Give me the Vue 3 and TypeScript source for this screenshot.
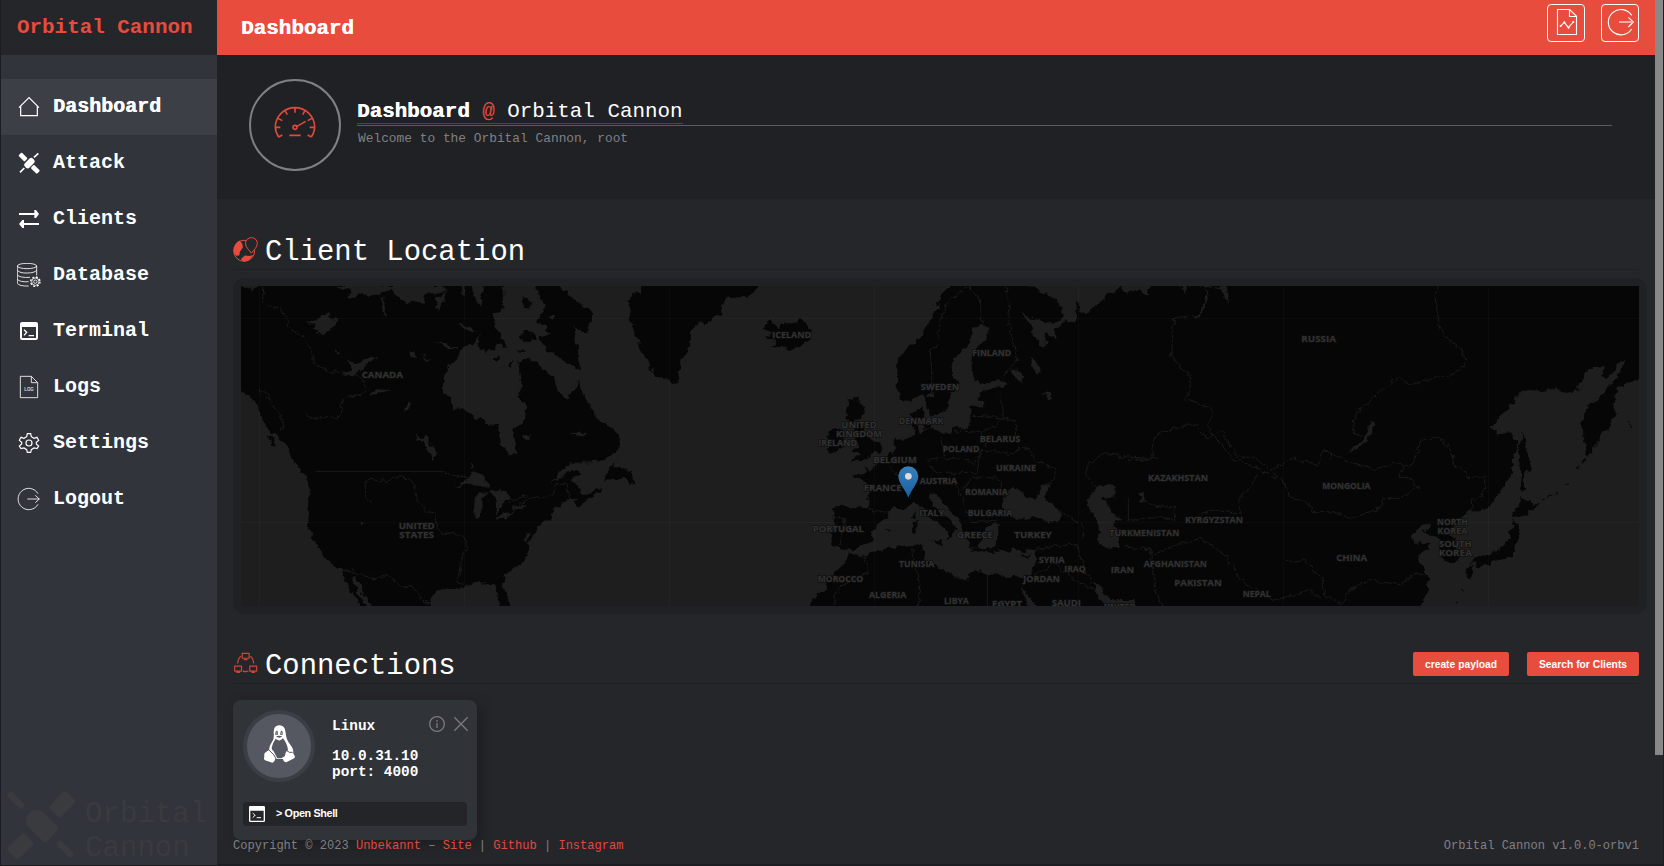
<script setup lang="ts">
interface NavItem {
  id: string
  label: string
  box: string
}

interface MapLabel {
  text: string
  x: number
  y: number
  w: number
}

const navItems: NavItem[] = [
  { id: 'home', label: 'Dashboard', box: '51 285 72 72' },
  { id: 'attack', label: 'Attack', box: '51 453 72 72' },
  { id: 'clients', label: 'Clients', box: '51 621 72 72' },
  { id: 'database', label: 'Database', box: '51 39 72 72' },
  { id: 'terminal', label: 'Terminal', box: '51 207 72 72' },
  { id: 'logs', label: 'Logs', box: '51 375 72 72' },
  { id: 'settings', label: 'Settings', box: '51 543 72 72' },
  { id: 'logout', label: 'Logout', box: '51 711 72 72' },
]

// Label centres and widths, in map units (three per pixel)
const labels: MapLabel[] = [
  { text: 'CANADA', x: 472, y: 324, w: 124 },
  { text: 'UNITED', x: 575, y: 776, w: 108 },
  { text: 'STATES', x: 575, y: 803, w: 104 },
  { text: 'ICELAND', x: 1700, y: 205, w: 116 },
  { text: 'UNITED', x: 1902, y: 473, w: 106 },
  { text: 'KINGDOM', x: 1902, y: 500, w: 138 },
  { text: 'IRELAND', x: 1838, y: 528, w: 116 },
  { text: 'SWEDEN', x: 2145, y: 361, w: 116 },
  { text: 'DENMARK', x: 2088, y: 463, w: 134 },
  { text: 'BELGIUM', x: 2010, y: 579, w: 130 },
  { text: 'FRANCE', x: 1973, y: 663, w: 114 },
  { text: 'PORTUGAL', x: 1840, y: 786, w: 154 },
  { text: 'MOROCCO', x: 1846, y: 935, w: 136 },
  { text: 'ALGERIA', x: 1988, y: 984, w: 112 },
  { text: 'TUNISIA', x: 2075, y: 892, w: 106 },
  { text: 'FINLAND', x: 2300, y: 258, w: 116 },
  { text: 'BELARUS', x: 2325, y: 517, w: 122 },
  { text: 'POLAND', x: 2208, y: 545, w: 110 },
  { text: 'UKRAINE', x: 2373, y: 603, w: 120 },
  { text: 'AUSTRIA', x: 2140, y: 643, w: 112 },
  { text: 'ROMANIA', x: 2284, y: 675, w: 128 },
  { text: 'ITALY', x: 2120, y: 738, w: 74 },
  { text: 'BULGARIA', x: 2295, y: 739, w: 134 },
  { text: 'GREECE', x: 2250, y: 804, w: 108 },
  { text: 'TURKEY', x: 2424, y: 804, w: 112 },
  { text: 'SYRIA', x: 2480, y: 879, w: 78 },
  { text: 'IRAQ', x: 2550, y: 905, w: 64 },
  { text: 'JORDAN', x: 2450, y: 935, w: 110 },
  { text: 'IRAN', x: 2692, y: 910, w: 70 },
  { text: 'LIBYA', x: 2194, y: 1001, w: 74 },
  { text: 'EGYPT', x: 2346, y: 1010, w: 90 },
  { text: 'SAUDI', x: 2524, y: 1007, w: 88 },
  { text: 'UNITED', x: 2684, y: 1020, w: 96 },
  { text: 'TURKMENISTAN', x: 2758, y: 797, w: 210 },
  { text: 'KAZAKHSTAN', x: 2859, y: 632, w: 180 },
  { text: 'KYRGYZSTAN', x: 2967, y: 759, w: 174 },
  { text: 'AFGHANISTAN', x: 2851, y: 892, w: 190 },
  { text: 'PAKISTAN', x: 2919, y: 948, w: 142 },
  { text: 'NEPAL', x: 3095, y: 981, w: 84 },
  { text: 'RUSSIA', x: 3281, y: 215, w: 104 },
  { text: 'MONGOLIA', x: 3364, y: 658, w: 144 },
  { text: 'CHINA', x: 3380, y: 872, w: 92 },
  { text: 'NORTH', x: 3682, y: 766, w: 92 },
  { text: 'KOREA', x: 3682, y: 792, w: 90 },
  { text: 'SOUTH', x: 3691, y: 831, w: 98 },
  { text: 'KOREA', x: 3691, y: 858, w: 100 },
]
</script>

<template>
  <div class="page">
    <aside class="sidebar">
      <div class="brand">Orbital Cannon</div>
      <nav class="nav">
        <a v-for="(item, i) in navItems" :key="item.id" class="nav-item" :class="{ active: i === 0 }">
          <svg class="nav-icon" :viewBox="item.box">
            <g v-if="item.id === 'home'" class="line">
              <path d="M57 323 L87 293 L117 323 M62 319 V347 H112 V319" />
            </g>
            <g v-else-if="item.id === 'attack'" class="solid">
              <rect x="-13" y="-7" width="26" height="14" rx="3" transform="translate(69 471) rotate(45)" />
              <rect x="-13" y="-7" width="26" height="14" rx="3" transform="translate(106 508) rotate(45)" />
              <rect x="-17" y="-9" width="34" height="19" rx="7" transform="translate(88 489) rotate(-45)" />
              <path d="M102 472 L115 460 M60 517 L73 504" stroke="#fff" stroke-width="5" />
            </g>
            <g v-else-if="item.id === 'clients'" class="solid">
              <path d="M57 639 H103 V630 L108 630 L117 642 L108 654 H103 V645 H57Z" />
              <path d="M117 669 H72 V660 H67 L57 672 L67 684 H72 V675 H117Z" />
            </g>
            <g v-else-if="item.id === 'database'" class="line fine">
              <ellipse cx="81" cy="48" rx="29" ry="8" />
              <path d="M52 48 V100 Q58 109 86 108 M110 48 V76 M52 61 Q60 70 81 69 Q103 69 110 61 M52 75 Q60 84 90 82 M52 88 Q60 97 86 95" />
              <circle cx="106" cy="95" r="11" />
              <circle cx="106" cy="95" r="14" stroke-dasharray="6 5" stroke-width="4" />
              <circle cx="106" cy="95" r="5" />
            </g>
            <g v-else-if="item.id === 'terminal'" class="solid">
              <path fill-rule="evenodd" d="M66 216 H108 Q114 216 114 222 V264 Q114 270 108 270 H66 Q60 270 60 264 V222 Q60 216 66 216Z M66 231 V264 H108 V231Z" />
              <path d="M72 239 L80 247 L72 256 M86 257 H102" fill="none" stroke="#fff" stroke-width="4" />
            </g>
            <g v-else-if="item.id === 'logs'" class="line fine">
              <path d="M61 379 H94 L113 398 V443 H61Z M94 379 V398 H113" />
              <text x="87" y="423" text-anchor="middle" class="log-text" textLength="29" lengthAdjust="spacingAndGlyphs">LOG</text>
            </g>
            <g v-else-if="item.id === 'settings'" class="line">
              <circle cx="87" cy="579" r="9" />
              <path d="M82 551 H92 L94 560 L102 565 L111 562 L116 571 L109 577 V582 L116 588 L111 596 L102 594 L94 599 L92 607 H82 L80 599 L72 594 L63 596 L58 588 L65 582 V577 L58 571 L63 562 L72 565 L80 560Z" />
            </g>
            <g v-else class="line fine">
              <path d="M114 731 A32 32 0 1 0 114 763 M82 747 H118 M106 736 L118 747 L106 758" />
            </g>
          </svg>
          <span>{{ item.label }}</span>
        </a>
      </nav>
      <div class="watermark">
        <svg viewBox="20 92 206 206">
          <rect x="-31" y="-10" width="62" height="20" rx="10" transform="translate(47 120) rotate(45)" />
          <rect x="-31" y="-10" width="62" height="20" rx="10" transform="translate(193 265) rotate(45)" />
          <rect x="-36" y="-24" width="72" height="48" rx="11" transform="translate(185 132) rotate(-45)" />
          <rect x="-36" y="-24" width="72" height="48" rx="11" transform="translate(60 257) rotate(-45)" />
          <path d="M82 198 A32 32 0 0 1 125 153 L168 195 Q176 203 168 211 L142 240 Q133 248 125 240Z" />
        </svg>
        <div class="watermark-text">Orbital<br />Cannon</div>
      </div>
    </aside>

    <main class="main">
      <header class="topbar">
        <h1>Dashboard</h1>
        <div class="top-actions">
          <div class="top-btn">
            <svg viewBox="489 12 114 114">
              <path d="M520.5 28.5 H557 L577.5 49 V103.5 H520.5Z M556.5 28 V49.5 H578" />
              <path d="M529 79 L541 67 L553 83 L568 66" />
              <circle cx="530" cy="78" r="1.5" /><circle cx="541" cy="67" r="1.5" /><circle cx="554" cy="83" r="1.5" /><circle cx="568" cy="66" r="1.5" />
            </svg>
          </div>
          <div class="top-btn">
            <svg viewBox="651 12 114 114">
              <path d="M743 46 A38 38 0 1 0 743 87 M733 52 L748 66 L733 81" />
              <path d="M705 66 H748" class="faded" />
            </svg>
          </div>
        </div>
      </header>

      <section class="hero">
        <div class="gauge">
          <svg viewBox="87 57 276 276">
            <path d="M176 231 Q166 215 166 202 A59 59 0 0 1 284 202 Q284 215 274 231 M176 231 L187 225 M274 231 L263 225 M166 202 H181 M284 202 H269 M225 143 V158 M195 152 L202 164 M255 152 L248 164 M174 175 L187 182 M276 175 L263 182 M208 226 H242 M231 199 L257 184" />
            <circle cx="225" cy="202" r="6" />
          </svg>
        </div>
        <div class="hero-copy">
          <div class="hero-title">
            <span><b>Dashboard</b> <i>@</i> Orbital Cannon</span>
          </div>
          <p>Welcome to the Orbital Cannon, root</p>
        </div>
      </section>

      <div class="content">
        <div class="section-head">
          <svg class="head-icon" viewBox="38 530 76 76">
            <circle cx="72" cy="572" r="32" class="ring-arc" />
            <path class="fill" d="M40 571 Q42 548 58 541 L66 550 L68 562 L59 575 L57 586 L48 587 Q40 582 40 571Z M62 597 L74 586 L88 588 L99 585 Q88 606 68 604Z" />
            <path class="cut" d="M94 579 C86 568 76 562 76 549 A18 17 0 0 1 112 549 C112 562 102 568 94 579Z" />
          </svg>
          <h2>Client Location</h2>
        </div>

        <div class="map-panel">
          <svg class="map" viewBox="48 48 4194 960" preserveAspectRatio="none">
            <defs>
              <filter id="coast" x="0" y="0" width="100%" height="100%" filterUnits="objectBoundingBox" color-interpolation-filters="sRGB">
                <feTurbulence type="fractalNoise" baseFrequency="0.05" numOctaves="3" seed="4" result="n" />
                <feDisplacementMap in="SourceGraphic" in2="n" scale="22" xChannelSelector="R" yChannelSelector="G" />
              </filter>
              <linearGradient id="pin" x1="0" y1="0" x2="0" y2="1">
                <stop offset="0" stop-color="#3a7fb5" />
                <stop offset="1" stop-color="#1560a3" />
              </linearGradient>
            </defs>
            <rect class="water" x="0" y="0" width="4300" height="1060" />
            <g filter="url(#coast)">
              <rect class="water" x="-40" y="-40" width="4400" height="1150" />

              <!-- North America -->
              <path class="land" d="M0 0 H833 L838 75 L832 120 L806 130 L805 165 L850 235 L820 225 L785 250 L775 235 L757 232 L765 190 L745 225 L718 228 L705 240 L700 262 L670 290 L655 325 L653 370 L675 380 L684 418 L712 415 L745 435 L785 462 L820 465 L824 520 L858 556 L873 545 L862 478 L895 460 L903 430 L900 395 L876 378 L890 350 L884 310 L880 275 L900 268 L935 275 L960 300 L990 320 L998 365 L1025 390 L1045 365 L1065 333 L1080 380 L1095 400 L1110 440 L1140 460 L1170 480 L1185 505 V530 L1170 545 L1140 570 L1100 577 L1040 578 L1005 605 L975 640 L1010 622 L1040 600 L1065 600 L1068 610 L1040 630 L1065 650 L1062 670 L1085 675 L1125 655 L1128 665 L1090 690 L1055 710 L1045 700 L1060 690 L1035 687 L985 715 L980 745 L935 770 L925 800 L910 815 L908 855 L890 880 L840 915 L834 945 L852 1000 V1030 H835 L820 985 L810 950 L790 940 L760 937 L725 945 L700 955 L650 955 L625 970 L615 1005 V1030 H465 L420 985 L405 940 L385 915 L380 920 L395 965 L430 1020 H415 L385 975 L370 950 L347 900 L300 868 L285 840 L257 795 L248 720 L255 650 L245 620 L200 570 L190 530 L160 500 L135 485 L110 445 L95 400 L48 360 L0 340Z" />
              <path class="land" d="M928 30 H980 L1030 75 L1070 105 L1108 130 L1095 160 L1082 193 L1060 180 L1045 165 L1050 200 L1060 235 L1065 300 L1035 285 L1000 260 L960 235 L940 200 L975 195 L955 165 L932 160 L955 125 L960 105 L940 70Z M893 85 Q915 72 922 100 Q915 122 897 112Z M882 200 L898 180 L918 190 L935 205 L900 217 L883 210Z M802 270 L820 258 L826 266 L808 280Z M852 275 L862 273 L860 293 L852 290Z M770 175 L790 165 L815 200 L805 235 L775 230Z M877 245 L895 235 L900 245Z" />
              <path class="land" d="M1185 552 L1170 572 L1165 590 L1190 595 L1220 605 L1225 645 L1200 625 L1175 630 L1137 632 L1150 600Z M198 565 L240 580 L270 612 L272 628 L240 610Z M130 490 L145 505 L155 533 L140 520Z" />
              <path class="water" d="M370 88 L410 73 L460 78 L500 55 L512 75 L545 95 L605 102 L590 75 L640 70 L665 60 L650 45 H330 L350 55 L380 60Z M712 45 H722 L718 80 L712 70Z M740 45 H780 L765 110 L745 75Z M240 155 L275 150 L310 128 L322 148 L340 148 L330 172 L305 188 L270 195 L280 180 L262 178 L275 163Z M350 315 L385 298 L362 265 L395 282 L435 262 L460 262 L425 280 L395 308 L375 320Z M430 378 L450 358 L500 360 L460 368Z M700 162 L725 165 L755 183 L740 187Z M630 217 L665 220 L700 240 L670 235Z M572 495 L590 505 L605 495 L632 550 L627 573 L612 540 L592 515 L575 512Z M552 250 L568 242 L572 265 L558 262Z M535 430 L545 400 L558 400 L550 425Z M690 650 L720 630 L750 605 L775 620 L792 650 L755 650 L725 640Z M748 740 L748 690 L760 670 L790 667 L770 690 L768 740 L757 747Z M795 660 L835 662 L862 690 L835 690 L830 710 L812 735 L808 690Z M808 745 L845 728 L870 722 L840 745 L815 750Z M860 712 L900 702 L905 710 L865 720Z M470 80 H478 L480 140 L470 115Z M635 85 L665 62 L640 125Z M885 500 L920 490 L905 510Z M1040 485 L1085 490 L1060 500Z M48 45 H100 L85 62Z M735 580 H742 V592 H735Z M405 750 L417 757 L412 765Z M972 135 L985 140 L980 150Z M900 790 L915 785 L905 820Z M328 240 L345 248 L335 252Z M590 255 L618 270 L605 272Z" />

              <!-- Greenland, Iceland, Britain -->
              <path class="land" d="M1250 20 H1620 L1580 72 L1525 88 L1505 80 L1485 130 L1455 155 L1435 168 L1425 155 L1400 180 L1390 240 L1370 270 L1360 340 L1345 345 L1325 325 L1290 320 L1270 280 L1245 235 L1230 180 L1215 150 L1213 110 L1222 70 L1248 72Z" />
              <path class="land" d="M1615 175 L1635 150 L1655 165 L1660 180 L1670 160 L1700 160 L1715 155 L1728 147 L1745 160 L1760 180 L1755 210 L1695 243 L1665 232 L1638 230 L1655 215 L1620 198 L1640 195Z" />
              <path class="land" d="M1870 385 L1905 380 L1903 400 L1922 410 L1910 440 L1890 448 L1915 480 L1935 505 L1970 520 L1965 545 L1925 560 L1905 570 L1870 580 L1905 550 L1875 545 L1900 530 L1890 500 L1885 450 L1865 440Z M1815 480 L1850 475 L1860 500 L1850 535 L1815 548 L1805 540 L1820 520 L1805 500Z" />

              <!-- Eurasia and North Africa -->
              <path class="land" d="M2190 20 L2155 70 L2135 100 L2145 110 L2100 170 L2085 205 L2045 240 L2015 275 V350 L2025 385 L2050 395 L2075 380 L2095 370 L2105 400 L2120 440 L2150 430 L2170 410 L2175 370 L2200 355 L2205 340 L2185 320 L2182 280 L2210 240 L2235 215 L2243 175 L2265 165 L2290 172 V195 L2265 225 L2240 260 V300 L2250 330 L2275 345 L2325 328 L2350 340 L2295 358 L2265 365 L2260 395 L2280 395 L2273 415 L2240 405 L2235 470 L2220 480 L2190 470 L2175 485 L2145 490 L2125 470 L2085 488 L2077 455 L2095 440 L2092 408 L2060 435 L2065 480 L2072 495 L2045 505 L2010 510 L2005 545 L1965 575 L1935 605 L1920 590 L1928 612 L1885 615 L1925 635 L1933 660 L1928 715 L1850 710 L1822 718 L1825 765 L1818 825 L1843 828 L1867 845 L1895 832 L1937 820 L1943 790 L1960 760 L1990 742 L1987 725 L2005 712 L2035 720 L2070 695 L2090 710 L2110 740 L2145 760 L2175 790 L2165 812 L2180 800 L2200 775 L2160 740 L2125 705 L2115 675 L2135 672 L2150 700 L2205 750 L2215 790 L2235 830 L2260 835 L2265 810 L2290 765 L2325 762 L2315 800 L2310 835 L2345 845 L2370 835 L2390 850 L2435 832 L2430 870 L2420 915 L2395 920 L2335 920 L2287 912 L2250 900 L2220 935 L2175 905 L2150 900 L2100 870 L2095 830 L2065 825 L2005 830 L1945 845 L1915 860 L1870 850 L1860 880 L1815 920 L1805 960 L1765 985 L1740 1030 H4300 V0 H2190Z" />
              <path class="land" d="M2062 728 H2072 V750 H2062Z M2060 762 L2078 755 L2075 795 L2062 793Z M2118 812 L2155 810 L2150 832Z M2095 465 L2115 462 L2112 478 L2098 478Z M1985 780 L1995 778 L1990 786Z M2240 835 H2320 V845 H2240Z" />
              <path class="water" d="M2395 20 L2415 48 L2465 70 L2512 110 V150 L2475 160 L2425 150 L2388 122 L2400 145 L2420 165 L2430 205 L2455 230 L2465 215 L2455 190 L2495 205 L2490 180 L2525 150 L2550 155 L2555 115 L2553 95 L2565 100 L2565 125 L2585 132 L2600 110 L2625 100 L2645 75 L2690 50 L2705 80 L2730 55 L2765 75 L2780 20Z" />
              <path class="water" d="M2825 20 L2875 55 L2890 75 L2880 45 L2940 45 L2952 80 L2940 110 L2925 145 L2890 135 L2925 135 L2940 90 L2945 55 L2995 45 L3010 70 L3012 105 L3000 90 L2995 60 L2950 45Z" />
              <path class="water" d="M2335 725 L2330 700 L2350 660 L2368 652 L2390 665 L2400 680 L2430 690 L2450 645 L2480 640 L2455 680 L2480 700 L2515 735 L2505 757 L2460 755 L2420 740 L2375 750Z" />
              <path class="water" d="M2590 690 L2610 655 L2650 643 L2672 650 L2665 680 L2635 685 L2665 735 L2690 745 L2665 760 L2682 790 V828 L2650 833 L2615 815 L2625 770 L2600 735Z M2357 300 L2375 295 L2395 320 L2390 340 L2370 330Z M2415 265 L2430 270 L2445 300 L2440 318 L2425 300Z M2455 365 L2475 370 L2480 385 L2470 392Z M2745 670 L2755 665 L2760 695 L2745 695Z" />
              <path class="water" d="M2385 945 L2450 1030 H2415 L2400 980Z M2605 940 L2625 945 L2645 980 L2675 990 L2725 990 V1030 H2660 L2615 975Z M3440 455 L3447 452 L3440 490 L3410 530 L3365 548 L3400 525 L3425 490Z M3313 550 H3320 L3318 570Z M2105 375 L2120 370 L2130 385Z M2310 860 L2400 858 L2340 880Z M2395 858 L2430 850 L2410 868Z" />
              <path class="land" d="M2385 858 L2420 850 L2400 866Z" />

              <!-- Pacific coast -->
              <path class="water" d="M4300 300 L4242 325 L4205 340 L4180 350 L4162 395 L4175 435 L4157 455 L4155 480 L4130 490 L4115 525 L4088 558 L4075 500 L4072 450 L4090 405 L4125 380 L4175 325 L4200 272 L4180 268 L4175 300 L4135 325 V292 L4090 295 L4055 355 L4065 360 L4015 370 L3990 352 L3970 362 L3905 360 L3880 375 L3845 425 L3793 473 L3815 480 V500 L3850 490 L3870 500 L3880 520 L3865 560 L3860 610 L3825 665 L3790 715 L3765 725 L3740 720 L3705 740 L3695 760 L3660 795 L3655 820 L3700 850 L3705 870 L3685 880 L3655 870 L3645 810 L3620 795 L3595 785 L3615 765 L3600 762 L3555 795 L3575 820 L3620 822 L3575 865 L3595 890 L3610 930 L3608 960 L3580 1030 H4300Z" />
              <path class="land" d="M3650 795 L3690 800 L3705 855 L3700 872 L3670 880 L3655 860Z M3893 485 L3902 520 L3910 570 L3922 605 L3898 602 L3893 640 L3905 658 L3885 665 V600 L3880 540Z M3883 675 L3910 695 L3935 705 L3905 735 L3862 745 L3870 720 L3885 710Z M3865 750 L3880 760 L3885 795 L3870 830 L3865 860 L3825 870 L3800 875 L3795 885 L3770 885 L3735 880 L3750 860 L3790 855 L3830 835 L3850 810Z M3720 890 L3745 888 L3740 920 L3727 925Z M3750 885 L3780 875 L3785 885 L3760 897Z" />
              <path d="M3935 705 L3970 680 L4000 662 M4020 645 L4028 640 M4060 595 L4085 562 M4210 460 L4222 475 M3690 1000 L3698 990 M3712 970 L3715 962" fill="none" stroke="#080808" stroke-width="4" stroke-dasharray="12 9" />

              <!-- Borders -->
              <g class="border">
                <path d="M650 604 L700 620 H735 M112 48 L115 100 L130 115 L165 112 L188 145 L190 170 L240 205 L262 250 L265 278 L310 304 L370 310 M395 310 L425 350 V368 L355 387 L345 440 L258 445 L243 430 M440 695 L423 685 L420 640 L435 628 L480 634 L500 625 L545 622 L570 645 L577 690 L600 725 L625 728 L640 775 L652 790 L680 790 L715 800 L730 830 L705 880 L702 915 L695 935 L715 940 M347 900 L380 902 L430 922 H470 L490 915 L535 957 L560 946 L600 1000 L620 1006 M865 715 L920 683 H970 L990 660 L1000 640 L1020 640 L1030 687 M100 352 L120 370 L175 450 L170 480 M840 700 L905 680" />
                <path d="M2225 48 L2265 85 L2275 165 M2340 48 L2355 100 L2350 150 L2375 270 L2330 325 M2225 48 L2170 95 L2145 160 L2140 220 L2115 240 L2120 290 V370 M2325 380 L2335 445 M2240 440 L2285 438 L2335 445 L2370 450 L2380 540 M2275 485 L2310 465 L2335 445 M2145 490 L2155 560 L2250 580 L2270 540 L2350 550 L2380 540 L2410 535 L2430 575 L2495 595 L2490 625 L2450 650 M2155 560 L2110 575 L2130 605 L2190 610 L2255 610 L2270 540 M2190 483 L2270 487 L2285 530 M1935 715 L1985 735 M1825 740 L1860 745 L1845 825 M1920 860 L1930 910 L1870 935 L1830 965 V1008 M2060 830 L2065 880 L2085 930 L2080 1008 M2055 680 L2050 640 L1990 590 M2095 640 L2190 630 L2205 680 L2240 755 L2320 750 M2320 625 L2340 680 L2350 700 M2215 655 L2245 620 L2320 625 M2430 920 L2490 880 L2550 930 L2610 960 M2435 840 L2555 820 L2570 870 L2600 940 M2500 720 L2570 760 L2575 810" />
                <path d="M2610 650 L2585 620 L2590 580 L2640 548 L2690 560 L2780 565 L2790 495 L2890 462 L2915 465 L2945 505 L2990 485 M3045 560 L3095 565 L3135 600 M2990 485 L3040 560 M2945 465 L3020 565 L3090 590 L3180 640 M2945 465 L2965 440 L2960 415 L2880 390 L2900 325 L2840 260 L2845 150 L2890 137 M2805 565 L2710 570 M2710 755 L2800 740 L2855 750 L2845 710 L2790 712 L2750 680 M2690 830 L2780 840 L2785 940 L2810 1008 M2785 855 L2850 825 L2925 805 L3000 855 L3045 930 L3150 990 L3260 960 L3290 990 M3135 600 L3205 565 L3280 585 L3295 538 L3360 570 L3445 598 L3510 580 L3560 590 L3590 510 L3640 505 L3670 530 L3690 585 L3740 625 L3785 620 L3770 680 L3740 690 L3738 720 M3135 600 L3180 640 L3190 680 L3240 690 L3265 725 L3330 725 L3375 745 L3470 715 L3475 685 L3520 685 L3580 650 L3550 625 L3525 620 L3535 590 M3100 610 L3075 655 L3040 690 L3050 730 L2950 720 L2900 760 M3640 48 L3630 100 L3650 190 L3715 245 L3720 285 L3690 310 L3600 330 L3560 347 L3520 322 L3390 430 L3385 490 L3410 497 M3185 875 L3235 870 L3290 920 L3300 980 L3350 1000 L3370 965 L3435 930 L3530 945 L3570 910 L3600 915" />
              </g>
            </g>
            <path class="border" d="M272 604 H652 M2287 915 V1008 M2710 683 V755" />
            <path class="grid" d="M103 48 V1008 M718 48 V1008 M1333 48 V1008 M1948 48 V1008 M2561 48 V1008 M3176 48 V1008 M3790 48 V1008 M48 145 H4242 M48 757 H4242" />
            <text v-for="(l, i) in labels" :key="i" class="label" :x="l.x" :y="l.y" :textLength="l.w" lengthAdjust="spacingAndGlyphs">{{ l.text }}</text>
            <path fill="url(#pin)" d="M2050 683 C2042 660 2020 640 2020 619 A30 30 0 0 1 2080 619 C2080 640 2058 660 2050 683Z" />
            <circle cx="2050" cy="619" r="10" fill="#dedede" />
          </svg>
        </div>

        <div class="section-head second">
          <svg class="head-icon" viewBox="38 64 76 76">
            <path class="ring" d="M66 71 H87 V86 H66Z M43 110 H64 V125 H43Z M89 110 H110 V125 H89Z M71 90 H82 M48 129 H59 M94 129 H105 M52 102 Q54 86 62 80 M101 102 Q99 86 91 80 M68 125 Q77 128 85 125" />
          </svg>
          <h2>Connections</h2>
          <div class="buttons">
            <button class="w1">create payload</button>
            <button class="w2">Search for Clients</button>
          </div>
        </div>

        <div class="cards">
          <article class="card">
            <div class="card-top">
              <div class="avatar">
                <svg viewBox="81 252 192 192">
                  <path fill="#fff" fill-rule="evenodd" d="M178 286 Q161 287 161 306 Q163 326 157 334 Q148 347 147 360 L138 366 Q131 370 133 379 Q130 388 135 391 L157 398 Q166 394 165 387 H189 Q191 397 199 397 L224 384 Q227 378 220 371 Q221 355 211 344 Q198 329 197 308 Q196 287 178 286Z M167 326 Q179 337 189 325 Q203 343 204 361 Q196 365 195 378 L184 385 H172 L160 362 Q155 360 155 353 Q158 338 167 326Z" />
                  <path fill="#555861" d="M165 314 Q166 301 172 302 Q175 304 174 314Z M180 314 Q181 301 186 302 Q190 305 188 314Z M168 319 Q177 315 187 319 Q177 327 168 319Z" />
                  <path d="M166 309 H173 M181 309 H188" stroke="#fff" stroke-width="2" />
                  <path d="M147 360 L162 375 L169 388 M199 361 Q208 370 218 367" fill="none" stroke="#555861" stroke-width="3" />
                </svg>
              </div>
              <div class="client">
                <div>Linux</div>
                <div class="addr">10.0.31.10<br />port: 4000</div>
              </div>
              <div class="card-actions">
                <svg viewBox="0 0 48 48"><circle cx="24" cy="24" r="22" /><path d="M24 21 V36 M24 12 V17" /></svg>
                <svg viewBox="0 0 48 48"><path d="M4 4 L44 44 M44 4 L4 44" /></svg>
              </div>
            </div>
            <div class="shell">
              <svg viewBox="87 528 48 48">
                <path fill="#fff" fill-rule="evenodd" d="M91 528 H131 Q135 528 135 532 V572 Q135 576 131 576 H91 Q87 576 87 572 V532 Q87 528 91 528Z M91 542 V572 H131 V542Z" />
                <path d="M98 549 L105 556 L98 563 M110 563 H123" fill="none" stroke="#fff" stroke-width="3" />
              </svg>
              <span>&gt; Open Shell</span>
            </div>
          </article>
        </div>

        <footer class="footer">
          <div>Copyright © 2023 <a>Unbekannt</a> – <a>Site</a> | <a>Github</a> | <a>Instagram</a></div>
          <div>Orbital Cannon v1.0.0-orbv1</div>
        </footer>
      </div>
    </main>
    <div class="scrollbar"><div class="thumb"></div></div>
  </div>
</template>

<style>
body {
  margin: 0;
  background: #1c1d22;
  overflow: hidden;
}
</style>

<style scoped>
* {
  box-sizing: border-box;
}
.page {
  display: flex;
  width: 1664px;
  height: 865px;
  padding-left: 1px;
  color: #fff;
  background: #1c1d22;
  font-family: 'Courier New', 'Liberation Mono', monospace;
}
.sidebar {
  display: flex;
  flex-direction: column;
  width: 216px;
  height: 864.5px;
  background: #31343b;
}
.brand {
  height: 55px;
  padding-left: 16px;
  background: #252629;
  color: #e74c3c;
  font-size: 20.9px;
  font-weight: 700;
  line-height: 56px;
}
.nav {
  padding-top: 24px;
}
.nav-item {
  display: flex;
  align-items: center;
  gap: 12px;
  height: 56px;
  padding-left: 16px;
  font-size: 20px;
  font-weight: 700;
}
.nav-item span {
  line-height: 24px;
}
.nav-item.active {
  background: #3d3f46;
}
.nav-item.active span {
  text-shadow: 0.5px 0 #fff;
}
.nav-icon {
  width: 24px;
  height: 24px;
}
.line {
  fill: none;
  stroke: #fff;
  stroke-width: 3.6;
}
.fine {
  stroke-width: 2.5;
}
.solid {
  fill: #fff;
}
.log-text {
  font: 700 18px 'Liberation Sans', sans-serif;
  fill: #ddd;
  stroke: none;
}
.watermark {
  display: flex;
  gap: 9px;
  margin-top: auto;
  padding: 0 0 5px 6px;
  color: #393b3f;
}
.watermark svg {
  width: 69px;
  height: 69px;
  fill: #393b3f;
}
.watermark-text {
  margin: 7px 0 -7px;
  font-size: 29.1px;
  line-height: 34px;
}
.main {
  width: 1438px;
  height: 864px;
  background: #25262a;
}
.topbar {
  display: flex;
  justify-content: space-between;
  height: 55px;
  padding: 4px 16px 0 24px;
  background: #e84c3d;
}
h1 {
  margin: 0;
  font-size: 20.9px;
  line-height: 50px;
  text-shadow: 0.5px 0 #fff;
}
.top-actions {
  display: flex;
  gap: 16px;
}
.top-btn {
  width: 38px;
  height: 38px;
  border: 1px solid #fff;
  border-radius: 4px;
}
.top-btn svg {
  display: block;
  width: 38px;
  height: 38px;
  margin: -1px;
  fill: none;
  stroke: #fff;
  stroke-width: 3.4;
}
.top-btn .faded {
  stroke: #f7c3bd;
  stroke-width: 5;
}
.hero {
  display: flex;
  gap: 16px;
  height: 144px;
  padding: 24px 43px 0 32px;
  background: #202124;
}
.gauge {
  width: 92px;
  height: 92px;
  border: 2px solid #808083;
  border-radius: 50%;
}
.gauge svg {
  display: block;
  width: 92px;
  height: 92px;
  margin: -2px;
  fill: none;
  stroke: #e04a3b;
  stroke-width: 4.8;
}
.hero-copy {
  flex: 1;
  padding-top: 20px;
}
.hero-title {
  display: flex;
  align-items: flex-start;
  height: 27px;
  border-bottom: 1px solid #5b5c5f;
  font-size: 20.87px;
}
.hero-title span {
  height: 25px;
  border-bottom: 1px solid #e60000;
  line-height: 26px;
  white-space: pre;
}
.hero-title b {
  text-shadow: 0.5px 0 #fff;
}
.hero-title i {
  color: #e84c3d;
  font-style: normal;
}
.hero p {
  margin: 5px 0 0 1px;
  color: #808083;
  font-size: 12.87px;
  line-height: 16px;
}
.content {
  padding: 0 8px 0 16px;
}
.section-head {
  display: flex;
  align-items: flex-end;
  gap: 7px;
  height: 71px;
  margin-right: 8px;
  border-bottom: 1px solid #1f2023;
}
.section-head.second {
  height: 70px;
}
.head-icon {
  width: 25px;
  height: 25px;
  margin-bottom: 7px;
  stroke-linejoin: round;
}
.fill {
  fill: #e84c3d;
}
.ring-arc {
  fill: none;
  stroke: #e84c3d;
  stroke-width: 3;
}
.cut {
  fill: #25262a;
  stroke: #e84c3d;
  stroke-width: 3;
}
.ring {
  fill: none;
  stroke: #cf4639;
  stroke-width: 3.6;
}
h2 {
  margin: 0;
  font-size: 28.9px;
  font-weight: 400;
  line-height: 32px;
}
.buttons {
  display: flex;
  gap: 18px;
  margin: 0 0 7px auto;
}
button {
  height: 24px;
  padding: 0;
  border: 0;
  border-radius: 2px;
  background: #e84c3d;
  color: #fff;
  font: 700 10.3px 'Liberation Sans', Arial, sans-serif;
}
.w1 {
  width: 96px;
}
.w2 {
  width: 112px;
}
.map-panel {
  height: 336px;
  margin-top: 8px;
  padding: 8px;
  border-radius: 12px;
  background: #202124;
}
.map {
  display: block;
  width: 1398px;
  height: 320px;
}
.water {
  fill: #1e1e1e;
}
.land {
  fill: #060606;
}
.border {
  fill: none;
  stroke: #1a1a1a;
  stroke-width: 3;
}
.grid {
  fill: none;
  stroke: #fff;
  stroke-opacity: 0.03;
  stroke-width: 3;
}
.label {
  font: 700 26px 'Open Sans', sans-serif;
  text-anchor: middle;
  fill: #323232;
  stroke: #101010;
  stroke-width: 4;
  paint-order: stroke;
}
.cards {
  height: 154px;
  padding-top: 16px;
}
.card {
  width: 244px;
  height: 140px;
  padding: 10px;
  border-radius: 8px;
  background: #303338;
  box-shadow: 4px 4px 14px rgba(0, 0, 0, 0.25);
}
.card-top {
  display: flex;
  height: 92px;
}
.avatar {
  width: 72px;
  height: 72px;
  border: 4px solid #3b3e44;
  border-radius: 50%;
  background: #555861;
}
.avatar svg {
  display: block;
  width: 64px;
  height: 64px;
}
.client {
  flex: 1;
  margin-left: 17px;
  padding-top: 8px;
  font-size: 14.4px;
  font-weight: 700;
  line-height: 16px;
}
.addr {
  margin-top: 14px;
}
.card-actions {
  display: flex;
  gap: 8px;
  padding-top: 6px;
  margin-right: -2px;
}
.card-actions svg {
  width: 16px;
  height: 16px;
  fill: none;
  stroke: #77797c;
  stroke-width: 4;
}
.shell {
  display: flex;
  align-items: center;
  gap: 11px;
  height: 24px;
  padding-left: 6px;
  border-radius: 4px;
  background: #242529;
  font: 700 10.8px 'Liberation Sans', Arial, sans-serif;
}
.shell span {
  letter-spacing: -0.35px;
  margin-top: -3px;
}
.shell svg {
  width: 16px;
  height: 16px;
}
.footer {
  display: flex;
  justify-content: space-between;
  padding-right: 8px;
  color: #808083;
  font-size: 12.05px;
  line-height: 17px;
}
.footer a {
  color: #e04a3b;
}
.scrollbar {
  width: 8px;
  height: 864px;
  background: #25262a;
}
.thumb {
  height: 755px;
  background: #888;
}
</style>
